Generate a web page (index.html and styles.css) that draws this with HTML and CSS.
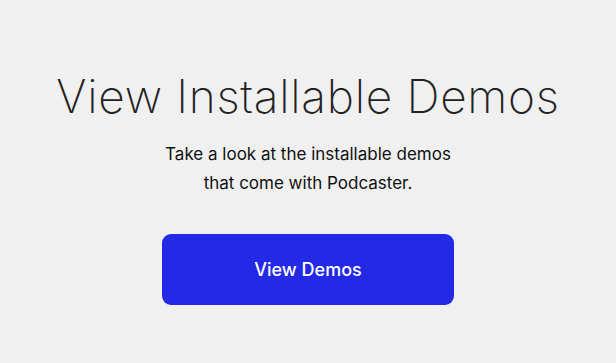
FILE: index.html
```html
<!DOCTYPE html>
<html lang="en">
<head>
  <meta charset="UTF-8" />
  <meta name="viewport" content="width=device-width, initial-scale=1.0"/>
  <title>View Installable Demos</title>
  <link rel="stylesheet" href="styles.css">
</head>
<body>
  <section class="demos">
    <h1>View Installable Demos</h1>
    <p class="lead">Take a look at the installable demos<br>that come with Podcaster.</p>
    <a class="demo-btn" href="#">View Demos</a>
  </section>
</body>
</html>
```

FILE: styles.css
```css
body {
  margin: 0;
  background: #f0f0f0;
  font-family: 'Inter', 'Liberation Sans', sans-serif;
  color: #1c1c1c;
}

.demos {
  display: flex;
  flex-direction: column;
  align-items: center;
  text-align: center;
  padding-top: 66px;
}

h1 {
  margin: 0;
  font-size: 46px;
  font-weight: 250;
  line-height: 60px;
  letter-spacing: 0.7px;
  color: #222;
}

.lead {
  margin: 14px 0 0;
  font-size: 17px;
  line-height: 29px;
  color: #111;
}

.demo-btn {
  margin-top: 36px;
  width: 292px;
  height: 71px;
  display: flex;
  align-items: center;
  justify-content: center;
  background: #2329e4;
  color: #fff;
  border-radius: 9px;
  text-decoration: none;
  font-size: 18px;
  font-weight: 500;
}
```
